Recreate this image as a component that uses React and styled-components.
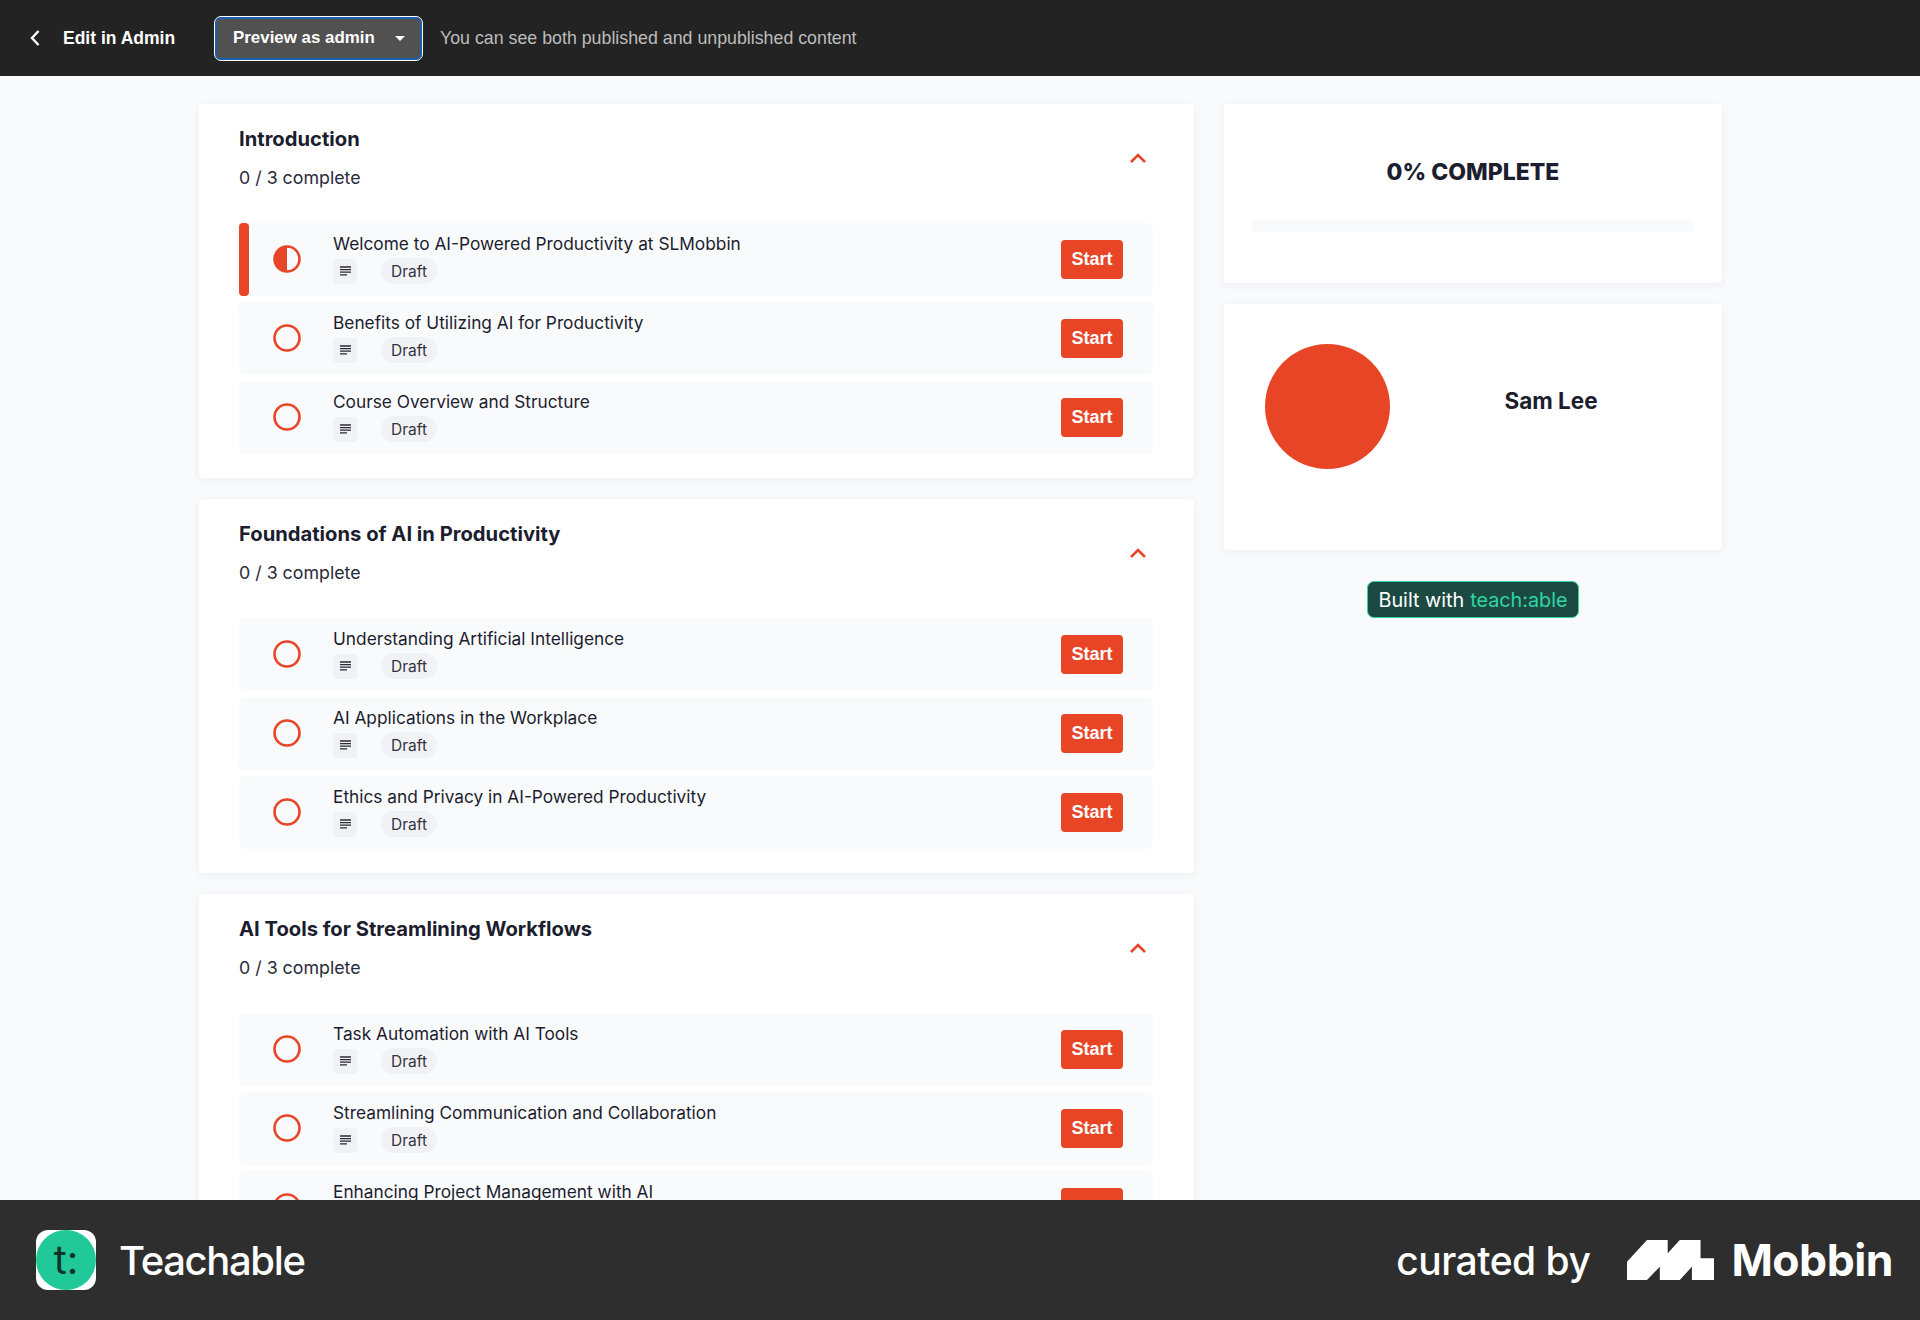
import React from 'react'
import styled, { createGlobalStyle } from 'styled-components'

const sections = [
  {
    title: 'Introduction',
    lessons: [
      'Welcome to AI-Powered Productivity at SLMobbin',
      'Benefits of Utilizing AI for Productivity',
      'Course Overview and Structure'
    ]
  },
  {
    title: 'Foundations of AI in Productivity',
    lessons: [
      'Understanding Artificial Intelligence',
      'AI Applications in the Workplace',
      'Ethics and Privacy in AI-Powered Productivity'
    ]
  },
  {
    title: 'AI Tools for Streamlining Workflows',
    lessons: [
      'Task Automation with AI Tools',
      'Streamlining Communication and Collaboration',
      'Enhancing Project Management with AI'
    ]
  }
]

const GlobalStyle = createGlobalStyle`
  html, body {
    margin: 0;
    padding: 0;
  }
  body {
    font-family: Inter, "Liberation Sans", sans-serif;
    color: #1c1d2e;
    background: #f9fafc;
  }
  * {
    box-sizing: border-box;
  }
`

const Screen = styled.div`
  width: 1920px;
  height: 1320px;
  display: flex;
  flex-direction: column;
  overflow: hidden;
`

const TopBar = styled.header`
  flex: 0 0 76px;
  display: flex;
  align-items: center;
  padding-left: 29px;
  background: #232323;
  font-family: "Liberation Sans", Arial, sans-serif;
`

const BackLink = styled.a`
  display: flex;
  align-items: center;
  gap: 22px;
  width: 186px;
  color: #fff;
  font-size: 17.5px;
  font-weight: 700;
`

const PreviewSelect = styled.div`
  width: 207px;
  height: 43px;
  display: flex;
  align-items: center;
  justify-content: space-between;
  padding: 0 15px 0 16px;
  margin-right: 18px;
  border-radius: 6px;
  border: 2px solid #1b5fae;
  outline: 1px solid #fff;
  background: #515151;
  color: #fff;
  font-size: 16.9px;
  font-weight: 700;
`

const Caret = styled.span`
  width: 0;
  height: 0;
  border-left: 5px solid transparent;
  border-right: 5px solid transparent;
  border-top: 5px solid #fff;
`

const TopNote = styled.span`
  color: #bdbdbd;
  font-size: 17.8px;
`

const Main = styled.main`
  flex: 1;
  min-height: 0;
  overflow: hidden;
  display: grid;
  grid-template-columns: 995px 498px;
  column-gap: 30px;
  align-content: start;
  padding: 28px 0 0 199px;
`

const Column = styled.div`
  display: flex;
  flex-direction: column;
  gap: 21px;
`

const Card = styled.section`
  background: #fff;
  border-radius: 4px;
  box-shadow: 0 2px 8px rgba(40, 50, 80, 0.06);
`

const SectionCard = styled(Card)`
  padding: 22px 41px 24px 40px;
`

const SectionHead = styled.div`
  display: flex;
  justify-content: space-between;
  align-items: center;
  height: 71px;
  margin-bottom: 26px;
`

const SectionText = styled.div`
  margin-bottom: 7px;
`

const SectionTitle = styled.h2`
  margin: 0 0 15px;
  font-size: 20.2px;
  line-height: 24px;
  font-weight: 700;
`

const SectionCount = styled.div`
  font-size: 17.8px;
  line-height: 24px;
  color: #2a2b3a;
`

const Chevron = styled.svg`
  width: 18px;
  height: 12px;
  margin: 0 6px 7px 0;
`

const Lessons = styled.div`
  display: flex;
  flex-direction: column;
  gap: 6px;
`

const Lesson = styled.div`
  position: relative;
  height: 73px;
  display: flex;
  align-items: center;
  padding: 0 30px 0 34px;
  background: #f9fafc;
  border-radius: 6px;
`

const ActiveMark = styled.span`
  position: absolute;
  left: 0;
  top: 0;
  bottom: 0;
  width: 10px;
  background: #e84527;
  border-radius: 4px;
`

const StatusIcon = styled.svg`
  flex: none;
  width: 28px;
  height: 28px;
  margin: 0 32px 2px 0;
`

const LessonBody = styled.div`
  flex: 1;
  padding-bottom: 2px;
`

const LessonTitle = styled.div`
  font-size: 17.3px;
  line-height: 22px;
  margin-bottom: 3px;
  color: #1c1d2e;
`

const LessonMeta = styled.div`
  display: flex;
  align-items: center;
  gap: 24px;
`

const TypeIcon = styled.span`
  width: 24px;
  height: 25px;
  display: flex;
  align-items: center;
  justify-content: center;
  background: #f1f2f5;
  border-radius: 4px;
`

const DraftTag = styled.span`
  height: 26px;
  padding: 0 10px;
  display: flex;
  align-items: center;
  background: #f1f2f5;
  border-radius: 13px;
  font-size: 15.5px;
  color: #33343f;
`

const StartButton = styled.button`
  width: 62px;
  height: 39px;
  padding: 0;
  border: 0;
  border-radius: 4px;
  background: #e84527;
  color: #fff;
  font-family: "Liberation Sans", Arial, sans-serif;
  font-size: 18px;
  font-weight: 700;
`

const ProgressCard = styled(Card)`
  height: 179px;
  padding: 54px 27px 0;
`

const ProgressLabel = styled.div`
  text-align: center;
  font-size: 23px;
  line-height: 28px;
  font-weight: 800;
  margin-bottom: 34px;
`

const ProgressTrack = styled.div`
  height: 12px;
  background: #f9fafb;
  border-radius: 4px;
`

const AuthorCard = styled(Card)`
  height: 246px;
  padding: 40px 40px 0 41px;
  display: flex;
  align-items: flex-start;
`

const Avatar = styled.div`
  flex: none;
  width: 125px;
  height: 125px;
  border-radius: 50%;
  background: #e84527;
`

const AuthorName = styled.div`
  flex: 1;
  padding: 43px 0 0 30px;
  text-align: center;
  font-size: 22.5px;
  line-height: 28px;
  font-weight: 700;
`

const BadgeRow = styled.div`
  display: flex;
  justify-content: center;
  margin-top: 10px;
`

const BuiltBadge = styled.div`
  height: 37px;
  width: 212px;
  display: flex;
  align-items: center;
  justify-content: center;
  gap: 6px;
  background: #1c4a43;
  border: 1px solid #2fd6a3;
  border-radius: 7px;
  color: #fff;
  font-size: 19.8px;
`

const BadgeBrand = styled.span`
  color: #2fd6a3;
`

const Footer = styled.footer`
  flex: 0 0 120px;
  display: flex;
  align-items: center;
  justify-content: space-between;
  padding: 0 27px 0 36px;
  background: #2e2e2e;
  color: #fff;
`

const Brand = styled.div`
  display: flex;
  align-items: center;
  gap: 23px;
  font-size: 40px;
  font-weight: 500;
  letter-spacing: -1.35px;
`

const AppIcon = styled.div`
  width: 60px;
  height: 60px;
  display: flex;
  align-items: center;
  justify-content: center;
  background: #fff;
  border-radius: 12px;
`

const AppIconDisc = styled.div`
  width: 60px;
  height: 60px;
  display: flex;
  align-items: center;
  justify-content: center;
  border-radius: 50%;
  background: #21c998;
  color: #11312b;
  font-size: 40px;
  font-weight: 400;
  letter-spacing: 0;
  line-height: 1;
`

const Curated = styled.div`
  display: flex;
  align-items: center;
  gap: 37px;
  font-size: 39px;
  font-weight: 500;
  letter-spacing: -0.5px;
`

const MobbinMark = styled.div`
  display: flex;
  align-items: center;
  gap: 17px;
  font-size: 44.5px;
  font-weight: 700;
  letter-spacing: -0.5px;
`

function HalfCircle() {
  return (
    <StatusIcon viewBox="0 0 28 28">
      <circle cx="14" cy="14" r="12.5" fill="none" stroke="#e84527" strokeWidth="2.6" />
      <path d="M14 1.5a12.5 12.5 0 0 0 0 25z" fill="#e84527" />
    </StatusIcon>
  )
}

function EmptyCircle() {
  return (
    <StatusIcon viewBox="0 0 28 28">
      <circle cx="14" cy="14" r="12.5" fill="none" stroke="#e84527" strokeWidth="2.6" />
    </StatusIcon>
  )
}

function TextLines() {
  return (
    <svg width="11" height="10" viewBox="0 0 11 10">
      <path d="M0 1h11M0 3.6h11M0 6.2h11M0 8.8h7" stroke="#2a2b36" strokeWidth="1.3" fill="none" />
    </svg>
  )
}

function SectionBlock({ section, first }) {
  return (
    <SectionCard>
      <SectionHead>
        <SectionText>
          <SectionTitle>{section.title}</SectionTitle>
          <SectionCount>0 / 3 complete</SectionCount>
        </SectionText>
        <Chevron viewBox="0 0 18 12">
          <path d="M2 10l7-7 7 7" fill="none" stroke="#e84527" strokeWidth="2.6" />
        </Chevron>
      </SectionHead>
      <Lessons>
        {section.lessons.map((lesson, i) => {
          const active = first && i === 0
          return (
            <Lesson key={lesson}>
              {active && <ActiveMark />}
              {active ? <HalfCircle /> : <EmptyCircle />}
              <LessonBody>
                <LessonTitle>{lesson}</LessonTitle>
                <LessonMeta>
                  <TypeIcon><TextLines /></TypeIcon>
                  <DraftTag>Draft</DraftTag>
                </LessonMeta>
              </LessonBody>
              <StartButton>Start</StartButton>
            </Lesson>
          )
        })}
      </Lessons>
    </SectionCard>
  )
}

export default function App() {
  return (
    <Screen>
      <GlobalStyle />
      <TopBar>
        <BackLink>
          <svg width="12" height="18" viewBox="0 0 12 18">
            <path d="M9.5 2L3 9l6.5 7" fill="none" stroke="#fff" strokeWidth="2.4" />
          </svg>
          Edit in Admin
        </BackLink>
        <PreviewSelect>
          Preview as admin
          <Caret />
        </PreviewSelect>
        <TopNote>You can see both published and unpublished content</TopNote>
      </TopBar>
      <Main>
        <Column>
          {sections.map((section, i) => (
            <SectionBlock key={section.title} section={section} first={i === 0} />
          ))}
        </Column>
        <Column>
          <ProgressCard>
            <ProgressLabel>0% COMPLETE</ProgressLabel>
            <ProgressTrack />
          </ProgressCard>
          <AuthorCard>
            <Avatar />
            <AuthorName>Sam Lee</AuthorName>
          </AuthorCard>
          <BadgeRow>
            <BuiltBadge>Built with <BadgeBrand>teach:able</BadgeBrand></BuiltBadge>
          </BadgeRow>
        </Column>
      </Main>
      <Footer>
        <Brand>
          <AppIcon><AppIconDisc>t:</AppIconDisc></AppIcon>
          Teachable
        </Brand>
        <Curated>
          curated by
          <MobbinMark>
            <svg width="87" height="40" viewBox="0 0 84 40" preserveAspectRatio="none">
              <path d="M0 21.7L19.3 0h20v13.3L51 0h20v18.3h13V40H62.7V26.7L51 40H31.7V26.7L19.3 40H0z" fill="#fff" />
            </svg>
            Mobbin
          </MobbinMark>
        </Curated>
      </Footer>
    </Screen>
  )
}
